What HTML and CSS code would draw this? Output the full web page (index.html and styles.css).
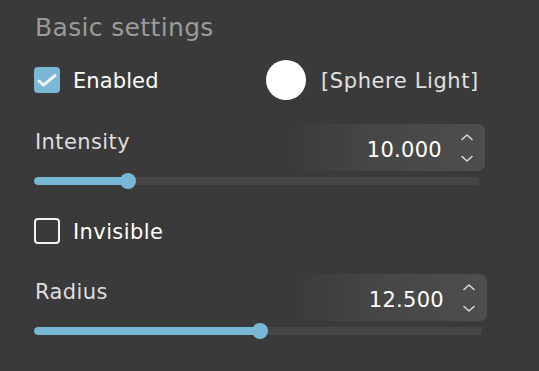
FILE: index.html
```html
<!DOCTYPE html>
<html>
<head>
<meta charset="utf-8">
<link rel="stylesheet" href="styles.css">
</head>
<body>
<div class="panel">
  <h2 class="title">Basic settings</h2>
  <div class="row-top">
    <div class="check">
      <span class="box on"><svg viewBox="0 0 26 26" width="26" height="26"><path d="M5 14 L9.5 18.2 L21 8.5" fill="none" stroke="#f2f2f2" stroke-width="3" stroke-linecap="round" stroke-linejoin="round"/></svg></span>
      <span class="check-label tight">Enabled</span>
    </div>
    <div class="light"><span class="dot"></span><span class="light-name">[Sphere Light]</span></div>
  </div>

  <div class="field">
    <div class="field-head">
      <span class="label">Intensity</span>
      <div class="num">
        <span class="num-val">10.000</span>
        <svg class="spin" viewBox="0 0 12 28" width="12" height="28"><path d="M1 5.5 L6 1 L11 5.5" fill="none" stroke="#d8d8d8" stroke-width="1.6" stroke-linecap="round" stroke-linejoin="round"/><path d="M1 22.5 L6 27 L11 22.5" fill="none" stroke="#d8d8d8" stroke-width="1.6" stroke-linecap="round" stroke-linejoin="round"/></svg>
      </div>
    </div>
    <div class="slider"><div class="track"><div class="fill" style="width:94px"></div></div><span class="thumb" style="left:94px"></span></div>
  </div>

  <div class="check row-invisible">
    <span class="box"></span>
    <span class="check-label">Invisible</span>
  </div>

  <div class="field field-wide">
    <div class="field-head">
      <span class="label">Radius</span>
      <div class="num">
        <span class="num-val">12.500</span>
        <svg class="spin" viewBox="0 0 12 28" width="12" height="28"><path d="M1 5.5 L6 1 L11 5.5" fill="none" stroke="#d8d8d8" stroke-width="1.6" stroke-linecap="round" stroke-linejoin="round"/><path d="M1 22.5 L6 27 L11 22.5" fill="none" stroke="#d8d8d8" stroke-width="1.6" stroke-linecap="round" stroke-linejoin="round"/></svg>
      </div>
    </div>
    <div class="slider"><div class="track"><div class="fill" style="width:226px"></div></div><span class="thumb" style="left:226px"></span></div>
  </div>
</div>
</body>
</html>
```

FILE: styles.css
```css
* { box-sizing: border-box; }
html, body {
  margin: 0;
  padding: 0;
  background: #3a3a3a;
  width: 539px;
  height: 371px;
  overflow: hidden;
}
body {
  font-family: "DejaVu Sans", Verdana, sans-serif;
  font-size: 21px;
  color: #e2e2e2;
  letter-spacing: 0.4px;
}
.panel {
  padding: 0 0 0 34px;
}
.title {
  margin: 13px 0 0 1px;
  font-size: 25px;
  font-weight: normal;
  line-height: 30px;
  color: #9a9a9a;
  letter-spacing: 0.35px;
}
.row-top {
  margin-top: 17px;
  height: 40px;
  display: grid;
  grid-template-columns: 232px auto;
  align-items: center;
}
.check {
  display: flex;
  align-items: center;
  gap: 13px;
}
.box {
  width: 26px;
  height: 26px;
  border-radius: 4px;
  border: 2px solid #f2f2f2;
  display: block;
}
.box.on {
  border: none;
  background: #7ab8d6;
}
.box svg { display: block; }
.check-label {
  color: #ffffff;
  line-height: 25px;
  padding-top: 2px;
}
.tight { letter-spacing: 0.1px; }
.light {
  display: flex;
  align-items: center;
  gap: 15px;
}
.dot {
  width: 40px;
  height: 40px;
  border-radius: 50%;
  background: #ffffff;
  display: block;
}
.light-name {
  color: #e0e0e0;
  letter-spacing: 0.6px;
  padding-top: 2px;
}
.field {
  margin-top: 24px;
  width: 451px;
}
.field-wide {
  margin-top: 30px;
  width: 453px;
}
.field-head {
  display: flex;
  justify-content: space-between;
  align-items: flex-start;
  height: 47px;
}
.label {
  margin-top: 6px;
  margin-left: 1px;
  line-height: 25px;
  color: #dedede;
}
.num {
  width: 195px;
  height: 47px;
  border-radius: 7px;
  background: linear-gradient(to right, rgba(255,255,255,0) 0%, rgba(255,255,255,0.06) 40%, rgba(255,255,255,0.1) 100%);
  display: flex;
  align-items: center;
  justify-content: flex-end;
  padding-right: 12px;
  gap: 19px;
}
.num-val {
  color: #ffffff;
  padding-top: 5px;
  line-height: 25px;
  letter-spacing: 0.3px;
}
.spin { display: block; }
.slider {
  position: relative;
  margin-top: 2px;
  height: 16px;
  width: calc(100% - 5px);
  display: flex;
  align-items: center;
}
.track {
  width: 100%;
  height: 8px;
  border-radius: 4px;
  background: #464646;
  overflow: hidden;
}
.fill {
  height: 100%;
  background: #78b7d6;
  border-radius: 4px;
}
.thumb {
  position: absolute;
  top: 0;
  width: 16px;
  height: 16px;
  margin-left: -8px;
  border-radius: 50%;
  background: #78b7d6;
}
.row-invisible {
  margin-top: 29px;
  height: 26px;
}
```
